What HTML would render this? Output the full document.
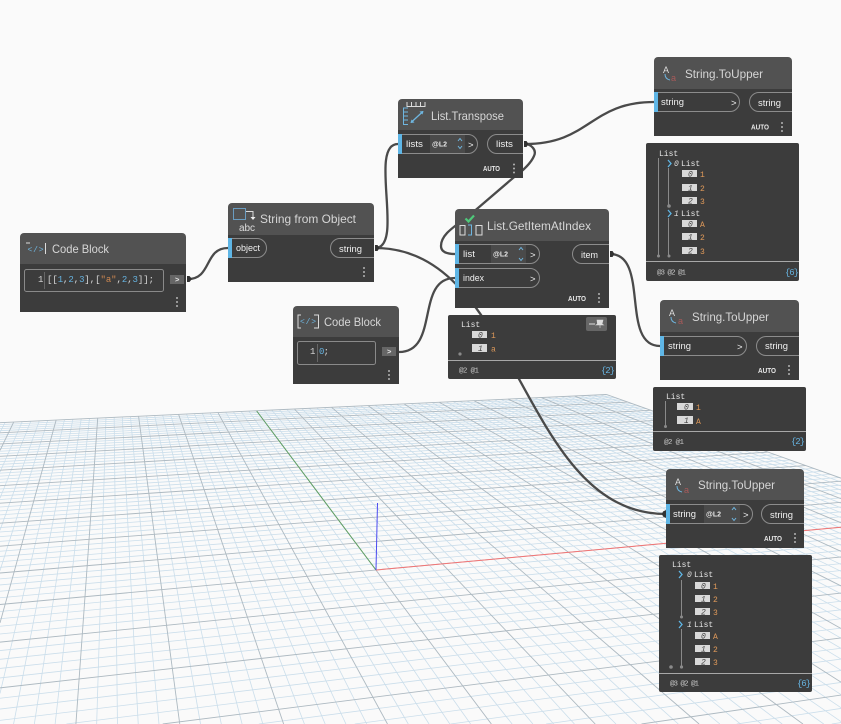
<!DOCTYPE html>
<html><head><meta charset="utf-8"><title>Dynamo graph</title>
<style>
html,body{margin:0;padding:0;background:#fafafa;width:841px;height:724px;overflow:hidden}
svg{display:block;position:absolute;left:0;top:0;overflow:hidden}
.t{font:12px "Liberation Sans",sans-serif;fill:#d6d6d6}
.p{font:9.500px "Liberation Sans",sans-serif;fill:#f0f0f0}
.a{font:bold 7.500px "Liberation Sans",sans-serif;fill:#e8e8e8}
.m{font:8px "Liberation Mono",monospace;fill:#e4e4e4}
.o{font:8px "Liberation Mono",monospace;fill:#e09a5a}
.i{font:italic 8px "Liberation Mono",monospace;fill:#444}
.f{font:7.500px "Liberation Mono",monospace;fill:#c8c8c8}
.b{font:9px "Liberation Mono",monospace;fill:#66b3e0}
.c{font:9px "Liberation Mono",monospace;fill:#d8d8d8}
.pill{fill:none;stroke:#8c8c8c;stroke-width:1}
.h{fill:#525252}.n{fill:#3c3c3c}
.w{fill:none;stroke:#4a4a4a;stroke-width:2.300}
.d{fill:#b4b4b4}
.ic{fill:none;stroke:#6fb6e0;stroke-width:1}
.iw{fill:none;stroke:#dcdcdc;stroke-width:1}
</style></head><body>
<svg id="grid" width="841" height="724" viewBox="0 0 841 724"></svg>
<svg width="841" height="724" viewBox="0 0 841 724">
<!-- axes -->
<line x1="376" y1="570" x2="256.700" y2="411" stroke="#5f9f62" stroke-width="1"/>
<line x1="376" y1="570" x2="841" y2="527.200" stroke="#f27474" stroke-width="1"/>
<line x1="376" y1="570" x2="377.500" y2="503" stroke="#4a4af0" stroke-width="1"/>
<!-- wires -->
<path class="w" d="M188 279C212 279 204 248 228 248"/>
<path class="w" d="M375 248C405 248 368 144 398 144"/>
<path class="w" d="M375 248C520 248 520 514 666 514"/>
<path class="w" d="M399 352C440 352 415 278 455 278"/>
<path class="w" d="M525 144C531 144 537 150 534 156C531 163 524 170 513 178L478 208C460 224 441 232 441 246C441 252 447 254 455 254"/>
<path class="w" d="M525 144C590 144 590 102 654 102"/>
<path class="w" d="M610 254C650 254 620 346 660 346"/>

<!-- Code Block 1 -->
<rect class="h" x="20" y="233" width="166" height="36" rx="4"/><rect class="n" x="20" y="264" width="166" height="48"/>
<text class="c" x="27.500" y="252" style="font-size:8px;fill:#6fb6e0" textLength="16">&lt;/&gt;</text>
<path class="iw" d="M26 243h4M45.500 243v11"/>
<text class="t" x="52" y="253" textLength="57" lengthAdjust="spacingAndGlyphs">Code Block</text>
<rect x="24.500" y="269.500" width="139" height="22" rx="2" fill="none" stroke="#8a8a8a"/>
<line x1="44.500" y1="272" x2="44.500" y2="289" stroke="#666"/>
<text class="c" x="38" y="282">1</text>
<text class="c" x="47" y="282" textLength="107">[[<tspan class="b">1</tspan>,<tspan class="b">2</tspan>,<tspan class="b">3</tspan>],[<tspan style="fill:#d08850">"a"</tspan>,<tspan class="b">2</tspan>,<tspan class="b">3</tspan>]];</text>
<rect x="170" y="275" width="14" height="9" fill="#666"/>
<text class="a" x="175" y="282">&gt;</text>
<path d="M187 276l2.500 0 2.500 3-2.500 3-2.500 0z" fill="#333"/>
<circle class="d" cx="177" cy="298" r="1"/><circle class="d" cx="177" cy="302" r="1"/><circle class="d" cx="177" cy="306" r="1"/>

<!-- String from Object -->
<rect class="h" x="228" y="203" width="146" height="36" rx="4"/><rect class="n" x="228" y="235" width="146" height="47"/>
<rect x="233.500" y="208.500" width="12" height="11" fill="none" stroke="#6a9cc0"/>
<path class="iw" d="M246 211.500h7v6"/><path d="M250.500 217h5l-2.500 3z" fill="#eee"/>
<text x="239" y="231" style="font:10px 'Liberation Sans',sans-serif;fill:#ddd" textLength="16">abc</text>
<text class="t" x="260" y="223" textLength="96" lengthAdjust="spacingAndGlyphs">String from Object</text>
<rect x="228" y="238" width="4" height="20" fill="#5fb6e6"/>
<path class="pill" d="M232 238.500H257a9.500 9.500 0 0 1 0 19H232"/>
<text class="p" x="236" y="251" textLength="24" lengthAdjust="spacingAndGlyphs">object</text>
<path class="pill" d="M374 238.500H340a9.500 9.500 0 0 0 0 19H374"/>
<text class="p" x="339" y="252" textLength="23" lengthAdjust="spacingAndGlyphs">string</text>
<path d="M375 245l2.500 0 2 3-2 3-2.500 0z" fill="#333"/>
<circle class="d" cx="364" cy="268" r="1"/><circle class="d" cx="364" cy="272" r="1"/><circle class="d" cx="364" cy="276" r="1"/>

<!-- Code Block 2 -->
<rect class="h" x="293" y="306" width="106" height="36" rx="4"/><rect class="n" x="293" y="337" width="106" height="47"/>
<text class="c" x="300" y="324" style="font-size:8px;fill:#6fb6e0" textLength="16">&lt;/&gt;</text>
<path class="iw" d="M301 315h-3v13h3M314 315h4.500v13h-4.500"/>
<text class="t" x="324" y="326" textLength="57" lengthAdjust="spacingAndGlyphs">Code Block</text>
<rect x="297.500" y="341.500" width="78" height="23" rx="2" fill="none" stroke="#8a8a8a"/>
<line x1="317.500" y1="344" x2="317.500" y2="362" stroke="#666"/>
<text class="c" x="310" y="354">1</text>
<text class="c" x="319" y="354" textLength="10"><tspan class="b">0</tspan>;</text>
<rect x="382" y="347" width="14" height="9" fill="#666"/>
<text class="a" x="387" y="354">&gt;</text>
<circle class="d" cx="389" cy="371" r="1"/><circle class="d" cx="389" cy="375" r="1"/><circle class="d" cx="389" cy="379" r="1"/>

<!-- List.Transpose -->
<rect class="h" x="398" y="99" width="125" height="36" rx="4"/><rect class="n" x="398" y="130" width="125" height="48"/>
<path class="iw" d="M407 102v4.500h18V102M411.500 102v4M416 102v4M420.500 102v4" stroke-width=".8"/>
<path class="ic" d="M403 108h5M403 112h5M403 116h5M403 120h5M403 124.500h5M403.500 108v16.500"/>
<path d="M411 122.500L423 111.500" stroke="#6fb6e0" stroke-width="1.300"/><path d="M423.500 111l-4 .5 3 3zM410.500 123l4-.5-3-3z" fill="#6fb6e0"/>
<text class="t" x="431" y="120" textLength="73" lengthAdjust="spacingAndGlyphs">List.Transpose</text>
<rect x="398" y="134" width="4" height="20" fill="#5fb6e6"/>
<path class="pill" d="M402 134.500H468a9.500 9.500 0 0 1 0 19H402"/>
<rect x="430" y="135" width="35" height="18" fill="#4a4a4a"/>
<text class="p" x="406" y="147" textLength="17" lengthAdjust="spacingAndGlyphs">lists</text>
<text class="a" x="432" y="146.500" textLength="15" style="font-size:7px">@L2</text>
<path d="M458 141l2-2.500 2 2.500" fill="none" stroke="#6fb6e0"/><path d="M458 146l2 2.500 2-2.500" fill="none" stroke="#6fb6e0"/>
<text class="p" x="468" y="148">&gt;</text>
<path class="pill" d="M523 134.500H497a9.500 9.500 0 0 0 0 19H523"/>
<text class="p" x="496" y="147" textLength="17" lengthAdjust="spacingAndGlyphs">lists</text>
<path d="M524 141l2.500 0 2 3-2 3-2.500 0z" fill="#333"/>
<text class="a" x="483" y="171" textLength="17" lengthAdjust="spacingAndGlyphs">AUTO</text>
<circle class="d" cx="514" cy="164.500" r="1"/><circle class="d" cx="514" cy="168.500" r="1"/><circle class="d" cx="514" cy="172.500" r="1"/>

<!-- List.GetItemAtIndex -->
<rect class="h" x="455" y="209" width="154" height="36" rx="4"/><rect class="n" x="455" y="241" width="154" height="67"/>
<path d="M465.500 218.500l3 3 5.500-6" fill="none" stroke="#4fc97a" stroke-width="2.200"/>
<path class="iw" d="M460 225.500h5v9.500h-5zM476 225.500h6v9.500h-6z" stroke-width=".8"/>
<path class="ic" d="M468 225h3.500v10h-3.500" stroke-width="1.200"/>
<text class="t" x="487" y="230" textLength="104" lengthAdjust="spacingAndGlyphs">List.GetItemAtIndex</text>
<rect x="455" y="244" width="4" height="20" fill="#5fb6e6"/>
<path class="pill" d="M459 244.500H530a9.500 9.500 0 0 1 0 19H459"/>
<rect x="491" y="245" width="35" height="18" fill="#4a4a4a"/>
<text class="p" x="463" y="257" textLength="12" lengthAdjust="spacingAndGlyphs">list</text>
<text class="a" x="493" y="256.500" textLength="15" style="font-size:7px">@L2</text>
<path d="M519 250l2-2.500 2 2.500" fill="none" stroke="#6fb6e0"/><path d="M519 258l2 2.500 2-2.500" fill="none" stroke="#6fb6e0"/>
<text class="p" x="530" y="258">&gt;</text>
<rect x="455" y="268" width="4" height="20" fill="#5fb6e6"/>
<path class="pill" d="M459 268.500H530a9.500 9.500 0 0 1 0 19H459"/>
<text class="p" x="463" y="281" textLength="21" lengthAdjust="spacingAndGlyphs">index</text>
<text class="p" x="530" y="282">&gt;</text>
<path class="pill" d="M609 244.500H582a9.500 9.500 0 0 0 0 19H609"/>
<text class="p" x="581" y="258" textLength="17" lengthAdjust="spacingAndGlyphs">item</text>
<path d="M610 251l2.500 0 2 3-2 3-2.500 0z" fill="#333"/>
<text class="a" x="568" y="301" textLength="18" lengthAdjust="spacingAndGlyphs">AUTO</text>
<circle class="d" cx="599" cy="294" r="1"/><circle class="d" cx="599" cy="298" r="1"/><circle class="d" cx="599" cy="302" r="1"/>

<!-- Watch 1 -->
<rect class="n" x="448" y="315" width="168" height="64" rx="2"/>
<rect x="586" y="317" width="21" height="14" rx="2" fill="#666"/>
<path d="M589 324h6" stroke="#ddd"/><path d="M597 320h6l-1 4 1.500 1h-7.500l1.500-1zM600 325v3" fill="#ddd" stroke="#ddd" stroke-width=".6"/>
<text class="m" x="461" y="327">List</text>
<rect x="472" y="331" width="15" height="7" fill="#d9d9d9"/><text class="i" x="478" y="337.500">0</text><text class="o" x="491" y="338">1</text>
<rect x="472" y="344" width="15" height="8" fill="#d9d9d9"/><text class="i" x="478" y="351">1</text><text class="o" x="491" y="351.500">a</text>
<circle cx="460" cy="354" r="1.600" fill="#8a8a8a"/>
<rect x="448" y="360" width="168" height="1" fill="#a8a8a8"/>
<text class="f" x="459" y="372.500" textLength="20">@2 @1</text>
<text class="b" x="601" y="373" textLength="14">{2}</text>

<!-- String.ToUpper 1 -->
<rect class="h" x="654" y="57" width="138" height="36" rx="4"/><rect class="n" x="654" y="89" width="138" height="47"/>
<text x="663" y="73" style="font:9px 'Liberation Sans',sans-serif;fill:#ddd">A</text>
<path class="ic" d="M665 74q0 5 5 6"/>
<text x="671" y="81" style="font:9px 'Liberation Sans',sans-serif;fill:#a85a5a">a</text>
<text class="t" x="685" y="78" textLength="78" lengthAdjust="spacingAndGlyphs">String.ToUpper</text>
<rect x="654" y="92" width="4" height="20" fill="#5fb6e6"/>
<path class="pill" d="M658 92.500H730a9.500 9.500 0 0 1 0 19H658"/>
<text class="p" x="661" y="105" textLength="23" lengthAdjust="spacingAndGlyphs">string</text>
<text class="p" x="731" y="106">&gt;</text>
<path class="pill" d="M792 92.500H759a9.500 9.500 0 0 0 0 19H792"/>
<text class="p" x="758" y="106" textLength="23" lengthAdjust="spacingAndGlyphs">string</text>
<text class="a" x="751" y="129.500" textLength="18" lengthAdjust="spacingAndGlyphs">AUTO</text>
<circle class="d" cx="782" cy="123" r="1"/><circle class="d" cx="782" cy="127" r="1"/><circle class="d" cx="782" cy="131" r="1"/>

<!-- Watch 2 -->
<rect class="n" x="646" y="143" width="153" height="138" rx="2"/>
<text class="m" x="659" y="156">List</text>
<path d="M658.500 158V256M668.500 168V206M668.500 218V256" stroke="#8a8a8a"/>
<circle cx="658.500" cy="256" r="1.500" fill="#8a8a8a"/><circle cx="669" cy="206" r="1.800" fill="#8a8a8a"/><circle cx="669" cy="256" r="1.500" fill="#8a8a8a"/>
<path d="M668 160l3 3.500-3 3.500M668 210l3 3.500-3 3.500" fill="none" stroke="#5fb6e6" stroke-width="1.300"/>
<text class="i" x="674" y="166" style="fill:#ddd">0</text><text class="m" x="681" y="166">List</text>
<rect x="682" y="170" width="15" height="7" fill="#d9d9d9"/><text class="i" x="688" y="176.500">0</text><text class="o" x="700" y="177">1</text>
<rect x="682" y="184" width="15" height="7" fill="#d9d9d9"/><text class="i" x="688" y="190.500">1</text><text class="o" x="700" y="191">2</text>
<rect x="682" y="197" width="15" height="7" fill="#d9d9d9"/><text class="i" x="688" y="203.500">2</text><text class="o" x="700" y="204">3</text>
<text class="i" x="674" y="216" style="fill:#ddd">1</text><text class="m" x="681" y="216">List</text>
<rect x="682" y="220" width="15" height="7" fill="#d9d9d9"/><text class="i" x="688" y="226.500">0</text><text class="o" x="700" y="227">A</text>
<rect x="682" y="233" width="15" height="7" fill="#d9d9d9"/><text class="i" x="688" y="239.500">1</text><text class="o" x="700" y="240">2</text>
<rect x="682" y="247" width="15" height="7" fill="#d9d9d9"/><text class="i" x="688" y="253.500">2</text><text class="o" x="700" y="254">3</text>
<rect x="646" y="261" width="153" height="1" fill="#a8a8a8"/>
<text class="f" x="657" y="274.500" textLength="29">@3 @2 @1</text>
<text class="b" x="785" y="275" textLength="14">{6}</text>

<!-- String.ToUpper 2 -->
<rect class="h" x="660" y="300" width="139" height="36" rx="4"/><rect class="n" x="660" y="332" width="139" height="48"/>
<text x="669" y="316" style="font:9px 'Liberation Sans',sans-serif;fill:#ddd">A</text>
<path class="ic" d="M671 317q0 5 5 6"/>
<text x="678" y="324" style="font:9px 'Liberation Sans',sans-serif;fill:#a85a5a">a</text>
<text class="t" x="692" y="321" textLength="77" lengthAdjust="spacingAndGlyphs">String.ToUpper</text>
<rect x="660" y="336" width="4" height="20" fill="#5fb6e6"/>
<path class="pill" d="M664 336.500H737a9.500 9.500 0 0 1 0 19H664"/>
<text class="p" x="668" y="349" textLength="23" lengthAdjust="spacingAndGlyphs">string</text>
<text class="p" x="737" y="350">&gt;</text>
<path class="pill" d="M799 336.500H766a9.500 9.500 0 0 0 0 19H799"/>
<text class="p" x="765" y="349" textLength="23" lengthAdjust="spacingAndGlyphs">string</text>
<text class="a" x="758" y="373" textLength="18" lengthAdjust="spacingAndGlyphs">AUTO</text>
<circle class="d" cx="789" cy="366" r="1"/><circle class="d" cx="789" cy="370" r="1"/><circle class="d" cx="789" cy="374" r="1"/>

<!-- Watch 3 -->
<rect class="n" x="653" y="387" width="153" height="64" rx="2"/>
<text class="m" x="666" y="399">List</text>
<path d="M665.500 401V426" stroke="#8a8a8a"/><circle cx="665.500" cy="426.500" r="1.500" fill="#8a8a8a"/>
<rect x="677" y="403" width="16" height="7" fill="#d9d9d9"/><text class="i" x="684" y="409.500">0</text><text class="o" x="696" y="410">1</text>
<rect x="677" y="416" width="16" height="8" fill="#d9d9d9"/><text class="i" x="684" y="423">1</text><text class="o" x="696" y="424">A</text>
<rect x="653" y="431" width="153" height="1" fill="#a8a8a8"/>
<text class="f" x="664" y="444" textLength="20">@2 @1</text>
<text class="b" x="791" y="444" textLength="14">{2}</text>

<!-- String.ToUpper 3 -->
<rect class="h" x="666" y="469" width="138" height="36" rx="4"/><rect class="n" x="666" y="500" width="138" height="48"/>
<text x="675" y="485" style="font:9px 'Liberation Sans',sans-serif;fill:#ddd">A</text>
<path class="ic" d="M677 486q0 5 5 6"/>
<text x="684" y="493" style="font:9px 'Liberation Sans',sans-serif;fill:#a85a5a">a</text>
<text class="t" x="698" y="489" textLength="77" lengthAdjust="spacingAndGlyphs">String.ToUpper</text>
<rect x="666" y="504" width="4" height="20" fill="#5fb6e6"/>
<path class="pill" d="M670 504.500H743a9.500 9.500 0 0 1 0 19H670"/>
<rect x="704" y="505" width="36" height="18" fill="#4a4a4a"/>
<text class="p" x="673" y="517" textLength="23" lengthAdjust="spacingAndGlyphs">string</text>
<text class="a" x="706" y="516.500" textLength="15" style="font-size:7px">@L2</text>
<path d="M732 510l2-2.500 2 2.500" fill="none" stroke="#6fb6e0"/><path d="M732 518l2 2.500 2-2.500" fill="none" stroke="#6fb6e0"/>
<text class="p" x="743" y="518">&gt;</text>
<path class="pill" d="M804 504.500H771a9.500 9.500 0 0 0 0 19H804"/>
<text class="p" x="770" y="518" textLength="23" lengthAdjust="spacingAndGlyphs">string</text>
<path d="M666 510l-3 1.500-1 2.500 1 2.500 3 1.500z" fill="#333"/>
<text class="a" x="764" y="541" textLength="18" lengthAdjust="spacingAndGlyphs">AUTO</text>
<circle class="d" cx="795" cy="534" r="1"/><circle class="d" cx="795" cy="538" r="1"/><circle class="d" cx="795" cy="542" r="1"/>

<!-- Watch 4 -->
<rect class="n" x="659" y="555" width="153" height="137" rx="2"/>
<text class="m" x="672" y="567">List</text>
<path d="M681.500 580V617M681.500 629V667" stroke="#8a8a8a"/>
<circle cx="681.500" cy="617" r="1.500" fill="#8a8a8a"/><circle cx="681.500" cy="667" r="1.600" fill="#8a8a8a"/><circle cx="671" cy="667" r="1.800" fill="#8a8a8a"/>
<path d="M679 571l3 3.500-3 3.500M679 621l3 3.500-3 3.500" fill="none" stroke="#5fb6e6" stroke-width="1.300"/>
<text class="i" x="687" y="577" style="fill:#ddd">0</text><text class="m" x="694" y="577">List</text>
<rect x="695" y="582" width="15" height="7" fill="#d9d9d9"/><text class="i" x="701" y="588.500">0</text><text class="o" x="713" y="589">1</text>
<rect x="695" y="595" width="15" height="7" fill="#d9d9d9"/><text class="i" x="701" y="601.500">1</text><text class="o" x="713" y="602">2</text>
<rect x="695" y="608" width="15" height="7" fill="#d9d9d9"/><text class="i" x="701" y="614.500">2</text><text class="o" x="713" y="615">3</text>
<text class="i" x="687" y="627" style="fill:#ddd">1</text><text class="m" x="694" y="627">List</text>
<rect x="695" y="632" width="15" height="7" fill="#d9d9d9"/><text class="i" x="701" y="638.500">0</text><text class="o" x="713" y="639">A</text>
<rect x="695" y="645" width="15" height="7" fill="#d9d9d9"/><text class="i" x="701" y="651.500">1</text><text class="o" x="713" y="652">2</text>
<rect x="695" y="658" width="15" height="7" fill="#d9d9d9"/><text class="i" x="701" y="664.500">2</text><text class="o" x="713" y="665">3</text>
<rect x="659" y="673" width="153" height="1" fill="#a8a8a8"/>
<text class="f" x="670" y="685.500" textLength="29">@3 @2 @1</text>
<text class="b" x="797" y="686" textLength="14">{6}</text>
</svg>
<script>
(function(){
var s=document.getElementById('grid'),NS='http://www.w3.org/2000/svg';
var VG=[112,218],VR=[4000,237],W=841,HH=724,NMAX=5;
function H(n){var y=217.5+1/(0.002584-0.000229*n);return [[0,y],VR];}
function V(k){return [[368.4-70.2*k,560],VG];}
function X(a,b){var x1=a[0][0],y1=a[0][1],x2=a[1][0],y2=a[1][1],x3=b[0][0],y3=b[0][1],x4=b[1][0],y4=b[1][1];
var d=(x1-x2)*(y3-y4)-(y1-y2)*(x3-x4),p=x1*y2-y1*x2,q=x3*y4-y3*x4;
return [(p*(x3-x4)-(x1-x2)*q)/d,(p*(y3-y4)-(y1-y2)*q)/d];}
function clip(a,b){var t0=0,t1=1,dx=b[0]-a[0],dy=b[1]-a[1],P=[-dx,dx,-dy,dy],Q=[a[0],W-a[0],a[1],HH-a[1]];
for(var i=0;i<4;i++){if(P[i]===0){if(Q[i]<0)return null;continue;}
var r=Q[i]/P[i];if(P[i]<0){if(r>t1)return null;if(r>t0)t0=r;}else{if(r<t0)return null;if(r<t1)t1=r;}}
return [[a[0]+t0*dx,a[1]+t0*dy],[a[0]+t1*dx,a[1]+t1*dy]];}
function L(a,b,c,w){var r=clip(a,b);if(!r)return;a=r[0];b=r[1];
var l=document.createElementNS(NS,'line');
l.setAttribute('x1',a[0].toFixed(2));l.setAttribute('y1',a[1].toFixed(2));l.setAttribute('x2',b[0].toFixed(2));l.setAttribute('y2',b[1].toFixed(2));
l.setAttribute('stroke',c);l.setAttribute('stroke-width',w);s.appendChild(l);}
var i,t,major,c,w;
for(var pass=0;pass<2;pass++){
for(i=-50;i<=50;i++){t=i/5;major=(i%5===0);
if(major!==(pass===1))continue;
c=major?'#adb9c1':'#cbdeeb';w=major?0.9:0.8;
if(t<=NMAX)L(X(H(t),V(10)),X(H(t),V(-10)),c,w);
L(X(V(t),H(-10)),X(V(t),H(NMAX)),c,w);
}}
})();
</script>
</body></html>
